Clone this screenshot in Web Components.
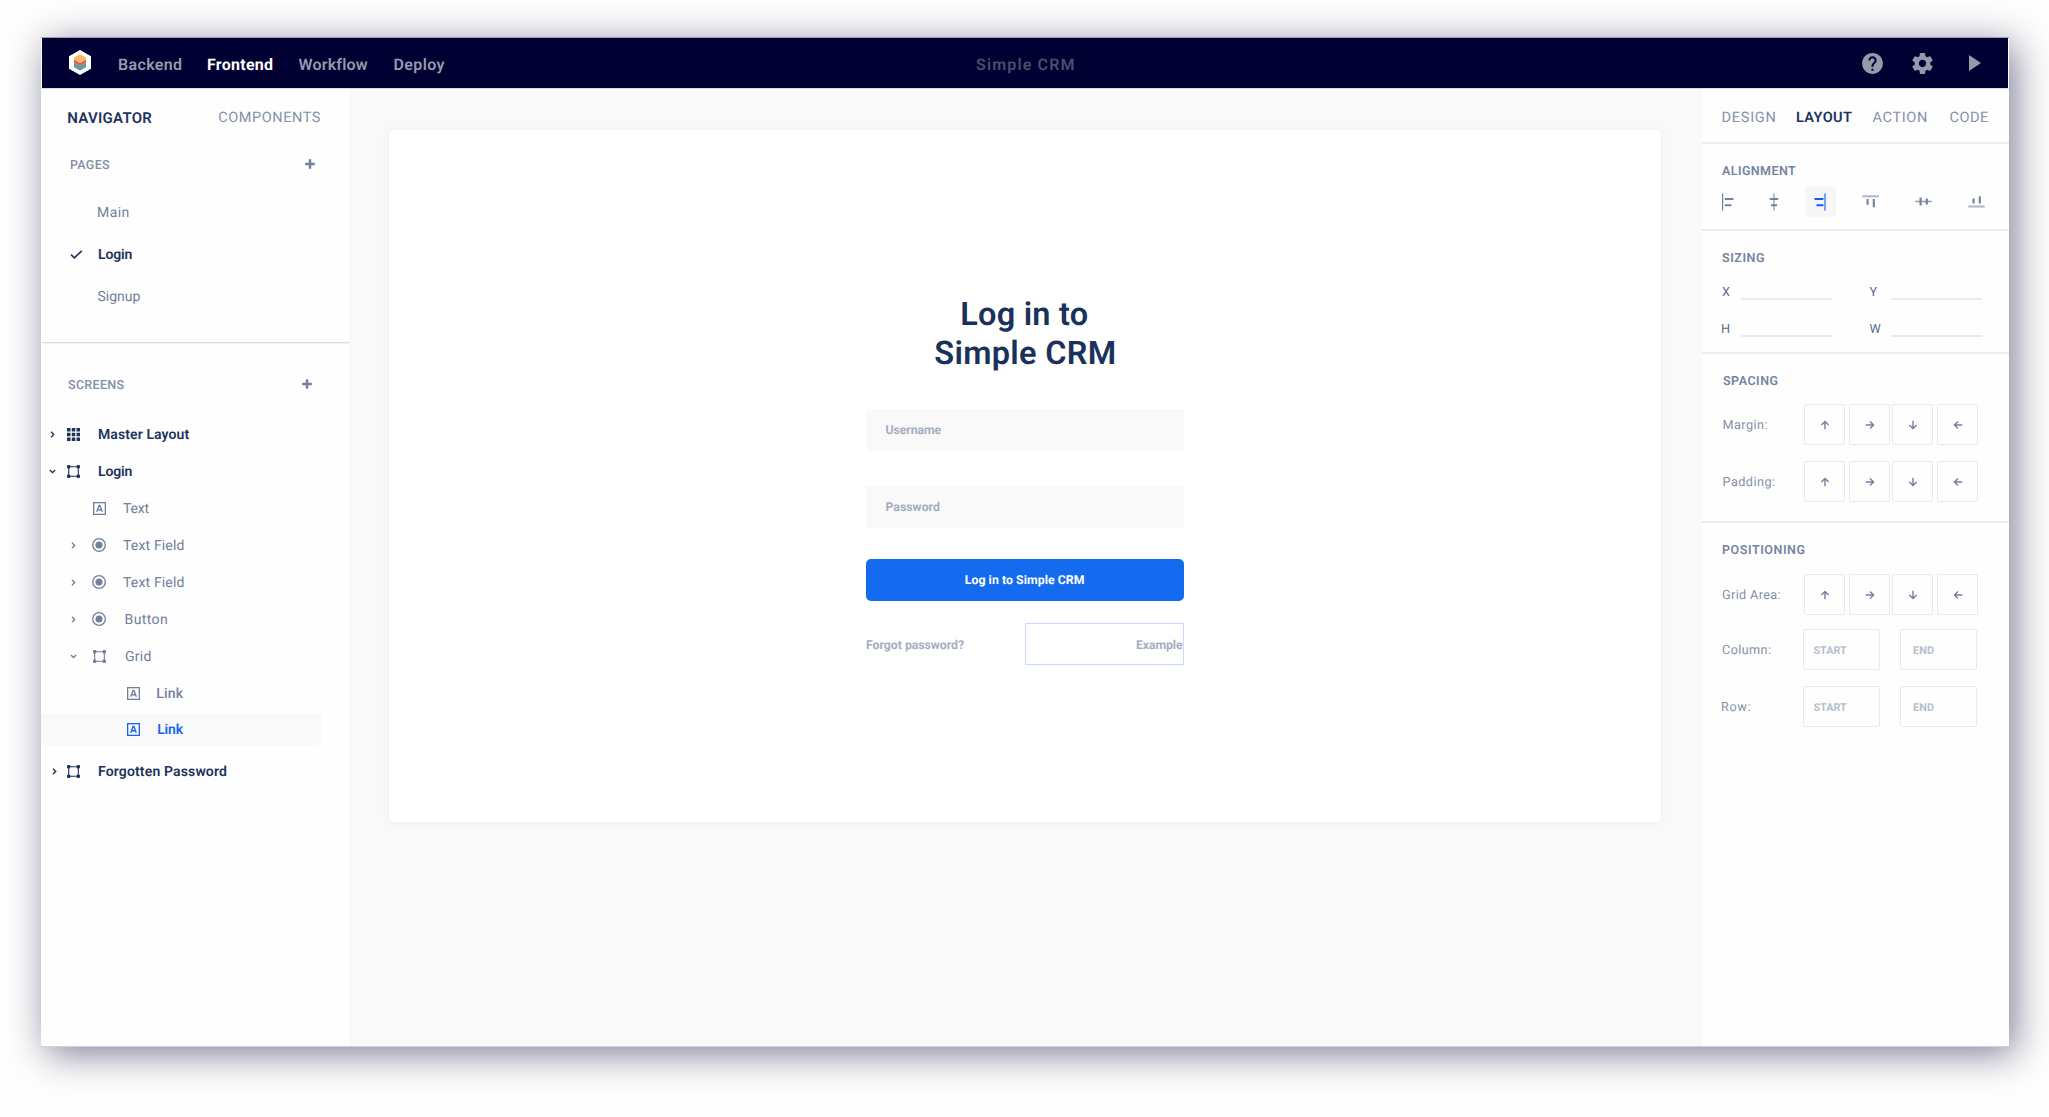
<!DOCTYPE html>
<html lang="en">
<head>
<meta charset="utf-8">
<title>Simple CRM</title>
<style>
html, body { margin: 0; height: 100%; background: #fefefe; overflow: hidden; }
body { font-family: Roboto, "Liberation Sans", sans-serif; text-rendering: geometricPrecision; box-sizing: border-box; padding: 37px 40px 70px 41px; }
</style>
</head>
<body>
<app-window></app-window>
<script>
const define = (name, html) => customElements.define(name, class extends HTMLElement {
  connectedCallback() {
    if (this.shadowRoot) return;
    const root = this.attachShadow({ mode: 'open' });
    root.innerHTML = typeof html === 'function' ? html(this) : html;
  }
});

/* One line of text whose tracking is set so that its ink spans `w` pixels. */
const ctx = document.createElement('canvas').getContext('2d');
define('t-label', el => {
  const text = el.textContent, size = +el.getAttribute('size') || 14, weight = el.getAttribute('weight') || 400;
  ctx.font = `${weight} ${size}px Roboto`;
  ctx.textRendering = 'geometricPrecision';
  const m = ctx.measureText(text), w = +el.getAttribute('w');
  const ink = m.actualBoundingBoxLeft + m.actualBoundingBoxRight;
  const track = text.length > 1 ? (w - ink) / (text.length - 1) : 0;
  return `<style>:host{display:block;flex:none;width:${w}px;height:20px;line-height:20px;white-space:nowrap;
    font-size:${size}px;font-weight:${weight};letter-spacing:${track.toFixed(3)}px}
    span{display:block;padding-top:${size > 14 ? 0 : 1}px;margin-left:${m.actualBoundingBoxLeft.toFixed(2)}px}</style><span><slot></slot></span>`;
});

const ICONS = {
  check: [13, 9, '<path d="M1 4.6 4.4 7.8 11.8 .8" fill="none" stroke="currentColor" stroke-width="1.6"/>'],
  plus: [10, 10, '<path d="M5 .2v9.600M.2 5h9.600" stroke="currentColor" stroke-width="2.4"/>'],
  right: [5, 7, '<path d="M1 .8 3.7 3.5 1 6.2" fill="none" stroke="currentColor" stroke-width="1.35"/>'],
  down: [7, 5, '<path d="M.8 1 3.5 3.5 6.2 1" fill="none" stroke="currentColor" stroke-width="1.35"/>'],
  apps: [13, 13, '<path fill="currentColor" d="M0 0h3.5v3.5H0zM4.75 0h3.5v3.5h-3.5zM9.5 0H13v3.5H9.5zM0 4.75h3.5v3.5H0zM4.75 4.75h3.5v3.5h-3.5zM9.5 4.75H13v3.5H9.5zM0 9.5h3.5V13H0zM4.75 9.5h3.5V13h-3.5zM9.5 9.5H13V13H9.5z"/>'],
  frame: [13, 13, '<path d="M2 1.7h9M2 11.3h9M1.7 2v9M11.3 2v9" stroke="currentColor" stroke-width="1.1"/><path fill="currentColor" d="M.8 0h1.8l.8.8v1.8l-.8.8H.8L0 2.6V.8zM10.4 0h1.8l.8.8v1.8l-.8.8h-1.8l-.8-.8V.8zM.8 9.6h1.8l.8.8v1.8l-.8.8H.8l-.8-.8v-1.8zM10.4 9.6h1.8l.8.8v1.8l-.8.8h-1.8l-.8-.8v-1.8z"/>'],
  glyph: [13, 13, '<rect x=".65" y=".65" width="11.7" height="11.7" fill="none" stroke="currentColor" stroke-width="1.3"/><path d="M3.7 9.8 6.1 3.4h.8l2.4 6.4M4.6 7.7h3.8" fill="none" stroke="currentColor" stroke-width="1.35"/>'],
  radio: [14, 14, '<circle cx="7" cy="7" r="6.3" fill="none" stroke="currentColor" stroke-width="1.3"/><circle cx="7" cy="7" r="3.5" fill="currentColor"/>'],
  help: [25, 25, '<path transform="scale(1.0417)" fill="currentColor" d="M12 2C6.48 2 2 6.48 2 12s4.480 10 10 10 10-4.480 10-10S17.520 2 12 2zm1 17h-2v-2h2v2zm2.070-7.750l-.9.920C13.450 12.900 13 13.500 13 15h-2v-.5c0-1.100.450-2.100 1.170-2.830l1.240-1.260c.370-.360.590-.860.590-1.410 0-1.100-.9-2-2-2s-2 .9-2 2H8c0-2.210 1.790-4 4-4s4 1.790 4 4c0 .880-.360 1.680-.930 2.250z"/>'],
  gear: [25, 25, '<path transform="scale(1.0417)" fill="currentColor" d="M19.430 12.980c.040-.320.070-.640.070-.980s-.030-.660-.070-.980l2.110-1.650c.190-.150.240-.420.120-.640l-2-3.460c-.120-.220-.390-.3-.610-.220l-2.490 1c-.520-.4-1.080-.730-1.690-.980l-.380-2.650C14.460 2.180 14.250 2 14 2h-4c-.250 0-.460.180-.490.420l-.380 2.650c-.610.250-1.170.590-1.690.980l-2.490-1c-.230-.090-.490 0-.610.220l-2 3.460c-.130.220-.070.490.120.640l2.110 1.650c-.040.320-.070.650-.070.980s.030.660.070.980l-2.110 1.650c-.190.150-.240.420-.120.640l2 3.460c.120.220.390.3.610.220l2.490-1c.520.4 1.080.730 1.690.980l.380 2.650c.030.240.240.420.490.420h4c.250 0 .460-.180.490-.420l.380-2.650c.610-.250 1.170-.590 1.690-.980l2.490 1c.230.090.490 0 .610-.220l2-3.460c.120-.220.070-.490-.120-.640l-2.110-1.650zM12 15.500c-1.930 0-3.500-1.570-3.500-3.500s1.570-3.500 3.500-3.500 3.500 1.570 3.500 3.500-1.570 3.500-3.500 3.500z"/>'],
  play: [12, 16, '<path fill="currentColor" d="M0 0v16l12-8z"/>'],
  alignL: [12, 18, '<path d="M.6 .5v17" stroke="currentColor" stroke-width="1.2"/><path d="M2.800 6H11.500M2.800 12.300H9.300" stroke="currentColor" stroke-width="1.9"/>'],
  alignC: [10, 18, '<path d="M5 .5v17" stroke="currentColor" stroke-width="1.2" opacity=".85"/><path d="M.8 6h8.400M2 12.300h6" stroke="currentColor" stroke-width="1.9"/>'],
  alignR: [12, 18, '<path d="M11 .5v17" stroke="currentColor" stroke-width="2" opacity=".55"/><path d="M.5 6H9.400M2.500 12.300H9.400" stroke="currentColor" stroke-width="2.1"/>'],
  alignT: [17, 13, '<path d="M.3 1.300h16.400" stroke="currentColor" stroke-width="2.1" opacity=".55"/><path d="M5.600 4v5.700M11.800 4v8.300" stroke="currentColor" stroke-width="2.1"/>'],
  alignM: [17, 9, '<path d="M.3 4.500h16.400" stroke="currentColor" stroke-width="1.6" opacity=".75"/><path d="M5.600 .5v8M11.800 1.500v6" stroke="currentColor" stroke-width="2.1"/>'],
  alignB: [17, 13, '<path d="M.3 11.500h16.400" stroke="currentColor" stroke-width="2.1" opacity=".55"/><path d="M5.600 3.600v5M11.800 1.300v7.300" stroke="currentColor" stroke-width="2.1"/>'],
  arrow: [10, 10, '<path d="M5 9.300V1.600M1.400 5 5 1.400 8.600 5" fill="none" stroke="currentColor" stroke-width="1.4"/>'],
  logo: [22, 25, '<path fill="#fff" d="M11 0 22 6.200v12.600L11 25 0 18.800V6.200z"/><path fill="#6f7fd0" d="M5 15.400v1.800l6 3.300 6-3.300v-1.800l-6 3.200z"/><path fill="#47a894" d="M5 12.600v3l6 3.300 6-3.300v-3l-6 3.200z"/><path fill="#f2525c" d="M5 9.300v3.300l6 3.400 6-3.400V9.300l-6 3.200z"/><path fill="#f6bb63" d="M11 4.300 17 7.500v2.300l-6 3.300-6-3.300V7.500z"/>']
};
define('ui-icon', el => {
  const [w, h, body] = ICONS[el.getAttribute('name')];
  return `<style>:host{display:block;flex:none;width:${w}px;height:${h}px}svg{display:block;overflow:visible;transform:rotate(${el.getAttribute('turn') || 0}deg)}</style>
  <svg width="${w}" height="${h}" viewBox="0 0 ${w} ${h}">${body}</svg>`;
});

define('app-header', `<style>
  :host{display:grid;grid-template-columns:1fr auto 1fr;align-items:center;height:50px;margin:0 1px;background:#000033;color:#9898ac}
  nav,.tools{display:flex;align-items:center}
  nav ui-icon{margin:0 28px 2px 27px}
  t-label{padding-top:3px}
  .on{color:#fff}.title{color:#4c4d6b;margin-right:.5px}
  .tools{justify-content:flex-end}
</style>
<nav><ui-icon name="logo"></ui-icon>
  <t-label size="16" weight="600" w="63">Backend</t-label>
  <t-label size="16" weight="700" w="65" class="on" style="margin-left:26px">Frontend</t-label>
  <t-label size="16" weight="600" w="69" style="margin-left:25.500px">Workflow</t-label>
  <t-label size="16" weight="600" w="50" style="margin-left:27px">Deploy</t-label></nav>
<t-label size="16" weight="600" w="97.500" class="title">Simple CRM</t-label>
<div class="tools"><ui-icon name="help"></ui-icon><ui-icon name="gear" style="margin-left:25px"></ui-icon><ui-icon name="play" style="margin:0 27.500px 0 33.500px"></ui-icon></div>`);

define('tree-row', el => {
  const a = n => el.getAttribute(n), chev = a('chevron'), cx = +a('cx') || 0;
  return `<style>
  :host{display:grid;grid-template-columns:${a('ix')}px ${a('lx') - a('ix')}px auto;align-items:center;height:37px;color:#71809b}
  :host([strong]){color:#1c345c}
  :host([selected]){color:#1665f0;height:31px;margin:2px 27px 4px 0;background:#f9f9f9;border-radius:0 5px 5px 0}
  .c{margin-left:${cx - (chev === 'down' ? 3.5 : 2.5)}px}
  </style><div>${chev ? `<ui-icon class="c" name="${chev}"></ui-icon>` : ''}</div>
  <div>${a('icon') ? `<ui-icon name="${a('icon')}"></ui-icon>` : ''}</div><slot></slot>`;
});

define('side-nav', `<style>
  :host{display:flex;flex-direction:column;width:308px;flex:none;background:#fefefe;color:#8490a8}
  .tabs{display:flex;height:58px;align-items:center;padding-left:27.300px}
  .on{color:#1c345c}
  .head{display:flex;align-items:center;height:20px}
  .head ui-icon{color:#71809b;margin-bottom:2px}
  .pages{margin-top:16px}.pages tree-row{height:42px}
  hr{width:307px;height:1px;border:0;margin:25px 0 32px 1px;background:#dedede;box-shadow:0 1px #f3f3f3}
  .tree{margin-top:20.500px}
</style>
<div class="tabs"><t-label size="15" weight="600" w="84" class="on">NAVIGATOR</t-label><t-label size="14.500" w="102.500" style="margin:0 0 1px 66px">COMPONENTS</t-label></div>
<div class="head" style="margin-top:8px;padding-left:29px"><t-label size="12.500" weight="500" w="40">PAGES</t-label><ui-icon name="plus" style="margin-left:194.500px"></ui-icon></div>
<div class="pages">
  <tree-row ix="28.500" lx="57"><t-label w="30.500">Main</t-label></tree-row>
  <tree-row ix="28.500" lx="57" strong icon="check"><t-label w="34.500" weight="600">Login</t-label></tree-row>
  <tree-row ix="28.500" lx="56.500"><t-label w="43">Signup</t-label></tree-row>
</div>
<hr>
<div class="head" style="padding-left:27px"><t-label size="12.500" weight="500" w="56.500">SCREENS</t-label><ui-icon name="plus" style="margin-left:177.500px"></ui-icon></div>
<div class="tree">
  <tree-row cx="11" ix="26" lx="57" strong chevron="right" icon="apps"><t-label w="91.500" weight="600">Master Layout</t-label></tree-row>
  <tree-row cx="11" ix="26" lx="57" strong chevron="down" icon="frame"><t-label w="34.500" weight="600">Login</t-label></tree-row>
  <tree-row ix="52" lx="82" icon="glyph"><t-label w="26.500">Text</t-label></tree-row>
  <tree-row cx="32.500" ix="51" lx="82" chevron="right" icon="radio"><t-label w="60.500">Text Field</t-label></tree-row>
  <tree-row cx="32.500" ix="51" lx="82" chevron="right" icon="radio"><t-label w="60.500">Text Field</t-label></tree-row>
  <tree-row cx="32.500" ix="51" lx="84.500" chevron="right" icon="radio"><t-label w="41.500">Button</t-label></tree-row>
  <tree-row cx="32.500" ix="52" lx="84" chevron="down" icon="frame"><t-label w="25.500">Grid</t-label></tree-row>
  <tree-row ix="85.500" lx="116.200" icon="glyph"><t-label w="26.500" weight="500">Link</t-label></tree-row>
  <tree-row ix="85.500" lx="116.200" icon="glyph" selected><t-label w="26.500" weight="600">Link</t-label></tree-row>
  <tree-row cx="13" ix="26" lx="57" strong chevron="right" icon="frame" style="margin-top:8px"><t-label w="129" weight="600">Forgotten Password</t-label></tree-row>
</div>`);

define('login-canvas', `<style>
  :host{display:block;flex:1;background:#f9f9f9;padding:41px 41px 0 40px;color:#a5aec0}
  .card{display:flex;flex-direction:column;align-items:center;height:692px;background:#fff;border-radius:5px;box-shadow:0 1px 8px rgba(0,0,0,.05)}
  h1{margin:164px 0 0;display:flex;flex-direction:column;align-items:center;color:#1a325b;font:inherit}
  h1 t-label{height:39px;display:flex;align-items:center}
  .field,.btn{box-sizing:border-box;width:318px;height:42px;display:flex;align-items:center;flex:none}
  .field{background:#f9f9f9;padding-left:19.500px}
  .btn{background:#156bf0;color:#fff;border-radius:5px;justify-content:center}
  .links{width:318px;display:flex;align-items:center;justify-content:space-between;margin-top:22px}
  .sel{box-sizing:border-box;width:159px;height:42px;border:1px solid #c9daf9;display:flex;align-items:center;justify-content:flex-end}
  .links t-label{padding-top:2px}
</style>
<div class="card">
  <h1><t-label size="32.500" weight="600" w="125.500">Log in to</t-label><t-label size="32.500" weight="600" w="179.500">Simple CRM</t-label></h1>
  <div class="field" style="margin-top:37px"><t-label size="12.300" weight="700" w="56">Username</t-label></div>
  <div class="field" style="margin-top:35px"><t-label size="12.300" weight="700" w="54.500">Password</t-label></div>
  <div class="btn" style="margin-top:31px"><t-label size="12.300" weight="700" w="119" style="margin-right:1.500px">Log in to Simple CRM</t-label></div>
  <div class="links"><t-label size="12.300" weight="700" w="98">Forgot password?</t-label><div class="sel"><t-label size="12.300" weight="700" w="47">Example</t-label></div></div>
</div>`);

define('arrow-set', `<style>
  :host{display:grid;grid-template-columns:45px 43px 45px 41px;color:#71809b}
  div{box-sizing:border-box;width:41px;height:41px;border:1px solid #e9e9e9;border-radius:2px;display:flex;align-items:center;justify-content:center;padding-top:1px}
</style>` + [0, 90, 180, 270].map(r => `<div><ui-icon name="arrow" turn="${r}"></ui-icon></div>`).join(''));

define('range-set', `<style>
  :host{display:grid;grid-template-columns:97px 77px;color:#b6bfcc}
  div{box-sizing:border-box;width:77px;height:41px;border:1px solid #e9e9e9;border-radius:2px;display:flex;align-items:center;padding-left:9.500px}
  div+div{padding-left:12px}
</style><div><t-label size="10.800" weight="700" w="33.500">START</t-label></div><div><t-label size="10.800" weight="700" w="21">END</t-label></div>`);

define('size-field', el => `<style>:host{display:grid;grid-template-columns:${el.getAttribute('lead')}px 91px;align-items:center;height:20px;color:#5a6b8e}
  div{height:16px;box-sizing:border-box;border-bottom:2px solid #eaeaea}</style><slot></slot><div></div>`);

define('panel-section', el => `<style>:host{display:block;box-sizing:border-box;border-bottom:2px solid #ededed;padding-left:20px;height:${el.getAttribute('h')}px}
  :host([last]){border:0}</style><slot></slot>`);

define('layout-panel', `<style>
  :host{display:block;width:307px;flex:none;background:#fefefe;color:#8490a8}
  .row{display:flex;align-items:center}
  .on{color:#1c345c}
  .h{color:#75849f}
  .row.f{height:41px;justify-content:space-between;padding-right:31px}
  .act{width:31px;height:31px;background:#f7f7f7;border-radius:4px;display:flex;align-items:center;justify-content:center;color:#0d5df5}
  .al{color:#71809b;height:31px;margin-top:5px}
  range-set{margin-right:1px}
</style>
<panel-section h="55"><div class="row" style="padding:19px 0 0 .5px">
  <t-label size="14.500" w="53">DESIGN</t-label><t-label size="14.500" weight="600" w="56" class="on" style="margin-left:20.500px">LAYOUT</t-label>
  <t-label size="14.500" w="54.500" style="margin-left:20.500px">ACTION</t-label><t-label size="14.500" w="38.500" style="margin-left:22.500px">CODE</t-label></div></panel-section>
<panel-section h="87"><t-label class="h" size="12.500" weight="600" w="74" style="padding-top:17px">ALIGNMENT</t-label>
  <div class="row al"><ui-icon name="alignL"></ui-icon><ui-icon name="alignC" style="margin-left:34.700px"></ui-icon>
  <div class="act" style="margin-left:26.300px"><ui-icon name="alignR"></ui-icon></div>
  <ui-icon name="alignT" style="margin-left:25.800px"></ui-icon><ui-icon name="alignM" style="margin-left:36.200px"></ui-icon><ui-icon name="alignB" style="margin-left:36.500px"></ui-icon></div></panel-section>
<panel-section h="123"><t-label class="h" size="12.500" weight="600" w="42" style="padding-top:17px">SIZING</t-label>
  <div class="row" style="margin-top:14px"><size-field lead="18.500"><t-label size="12.700" w="8">X</t-label></size-field><size-field lead="21.500" style="margin-left:38px"><t-label size="12.700" w="8">Y</t-label></size-field></div>
  <div class="row" style="margin-top:17px"><size-field lead="18.500"><t-label size="12.700" w="8">H</t-label></size-field><size-field lead="21.500" style="margin-left:38px"><t-label size="12.700" w="11">W</t-label></size-field></div></panel-section>
<panel-section h="169"><t-label class="h" size="12.500" weight="600" w="54.500" style="padding:17px 0 0 1px">SPACING</t-label>
  <div class="row f" style="margin-top:13px"><t-label size="12.700" w="44" style="margin-left:1.500px">Margin:</t-label><arrow-set></arrow-set></div>
  <div class="row f" style="margin-top:16px"><t-label size="12.700" w="51.500" style="margin-left:1.500px">Padding:</t-label><arrow-set></arrow-set></div></panel-section>
<panel-section h="260" last><t-label class="h" size="12.500" weight="600" w="82.500" style="padding-top:17px">POSITIONING</t-label>
  <div class="row f" style="margin-top:14px"><t-label size="12.700" w="58.500">Grid Area:</t-label><arrow-set></arrow-set></div>
  <div class="row f" style="margin-top:14px"><t-label size="12.700" w="49">Column:</t-label><range-set></range-set></div>
  <div class="row f" style="margin-top:16px"><t-label size="12.700" w="28.500">Row:</t-label><range-set></range-set></div></panel-section>`);

define('app-window', `<style>
  :host{display:flex;flex-direction:column;box-sizing:border-box;height:1010px;width:1968px;background:#fefefe;border-top:1px solid #9b9bad;border-bottom:1px solid #d0d1dc;box-shadow:6px 7px 36px rgba(0,0,51,.5)}
  main{display:flex;flex:1;border-top:1px solid #dcdce2}
</style><app-header></app-header><main><side-nav></side-nav><login-canvas></login-canvas><layout-panel></layout-panel></main>`);
</script>
</body>
</html>
